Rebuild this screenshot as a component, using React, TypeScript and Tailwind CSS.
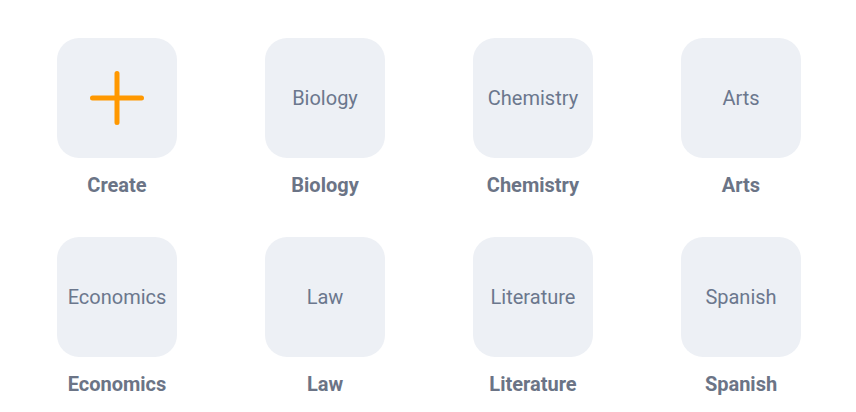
import React from "react";

const items = ["Biology", "Chemistry", "Arts", "Economics", "Law", "Literature", "Spanish"];

function Plus() {
  return (
    <svg width="60" height="60" viewBox="0 0 60 60" fill="none">
      <path d="M30 5.5V54.5M5.5 30H54.5" stroke="#ff9800" strokeWidth="5" strokeLinecap="round" />
    </svg>
  );
}

function Tile({ label, create }: { label: string; create?: boolean }) {
  return (
    <div className="flex flex-col items-center">
      <div className="w-[120px] h-[120px] rounded-[22px] bg-[#edf0f5] flex items-center justify-center">
        {create ? (
          <Plus />
        ) : (
          <span className="text-[20px] leading-none text-[#6b778d]">{label}</span>
        )}
      </div>
      <div className="mt-[15px] text-[20px] leading-[24px] font-bold text-[#6b7486]">{label}</div>
    </div>
  );
}

export default function App() {
  return (
    <div className="w-[856px] h-[412px] bg-white overflow-hidden" style={{ fontFamily: "Roboto, 'Liberation Sans', sans-serif" }}>
      <div className="pl-[13px] pt-[38px] grid grid-cols-[repeat(4,208px)] gap-y-[40px]">
        <Tile label="Create" create />
        {items.map((t) => (
          <Tile key={t} label={t} />
        ))}
      </div>
    </div>
  );
}
